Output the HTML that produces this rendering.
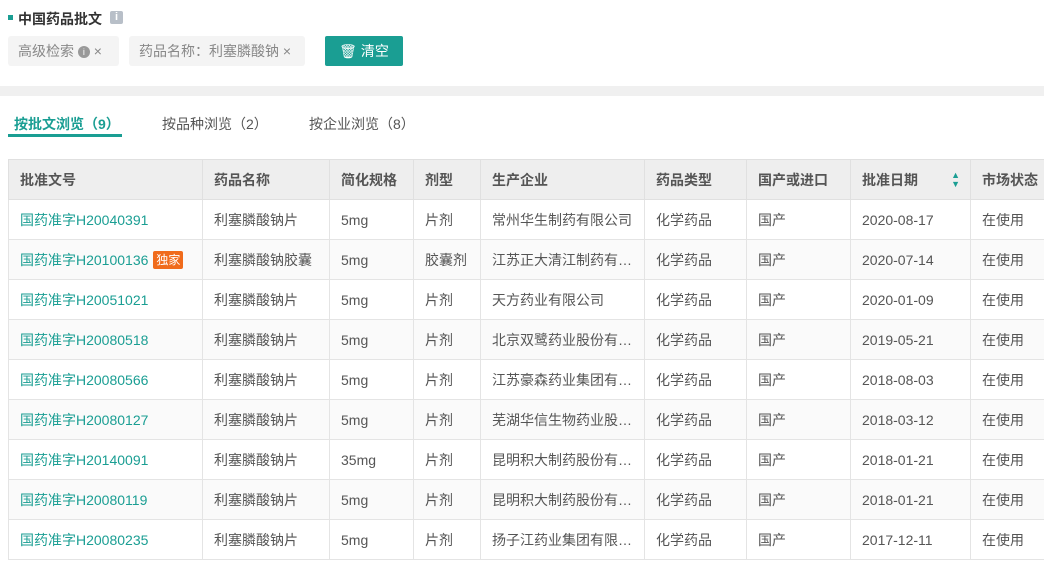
<!DOCTYPE html>
<html><head><meta charset="utf-8"><style>
*{margin:0;padding:0;box-sizing:border-box}
body{width:1044px;height:565px;overflow:hidden;background:#fff;font-family:"Liberation Sans","Noto Sans CJK SC",sans-serif;color:#555;position:relative}
.a{position:absolute}
.tag{position:absolute;top:36px;height:30px;background:#f4f4f4;border-radius:3px;font-size:14px;color:#888;line-height:30px;padding-left:10px}
table{position:absolute;left:8px;top:159px;border-collapse:collapse;font-size:14px;table-layout:fixed;width:1046px}
td,th{border:1px solid #e4e4e4;height:40px;padding-left:11px;text-align:left;white-space:nowrap;overflow:hidden}
th{background:#eeeeee;color:#555;font-weight:bold;border-color:#e0e0e0}
td{color:#555}
tr:nth-child(odd) td{background:#fafafa}
td.l{color:#1a9e93}
.badge{display:inline-block;background:#f06b1c;color:#fff;font-size:12px;padding:0 3px;line-height:18px;border-radius:2px;margin-left:5px;vertical-align:1px}
</style></head><body>
<div class="a" style="left:8px;top:15px;width:5px;height:5px;background:#1a9e93"></div>
<div class="a" style="left:18px;top:9px;font-size:14px;font-weight:bold;color:#333">中国药品批文</div>
<div class="a" style="left:110px;top:11px;width:13px;height:13px;background:#b8bfc8;border-radius:2px;color:#fff;font-size:11px;text-align:center;line-height:13px;font-weight:bold">i</div>
<div class="tag" style="left:8px;width:111px">高级检索 <span style="display:inline-block;width:12px;height:12px;border-radius:50%;background:#999;color:#fff;font-size:9px;line-height:12px;text-align:center;vertical-align:1px">i</span> ×</div>
<div class="tag" style="left:129px;width:176px">药品名称：利塞膦酸钠 ×</div>
<div class="a" style="left:325px;top:36px;width:78px;height:30px;background:#1a9e93;border-radius:2px;color:#fff;font-size:14px;line-height:30px;text-align:center">&#x1F5D1;&#xFE0E; 清空</div>
<div class="a" style="left:0;top:86px;width:1044px;height:10px;background:#f0f0f0"></div>
<div class="a" style="left:14px;top:114px;font-size:14px;font-weight:bold;color:#1a9e93">按批文浏览（9）</div>
<div class="a" style="left:8px;top:134px;width:114px;height:3px;background:#1a9e93"></div>
<div class="a" style="left:162px;top:114px;font-size:14px;color:#555">按品种浏览（2）</div>
<div class="a" style="left:309px;top:114px;font-size:14px;color:#555">按企业浏览（8）</div>
<table>
<colgroup><col style="width:194px"><col style="width:127px"><col style="width:84px"><col style="width:67px"><col style="width:164px"><col style="width:102px"><col style="width:104px"><col style="width:120px"><col style="width:84px"></colgroup>
<tr><th>批准文号</th><th>药品名称</th><th>简化规格</th><th>剂型</th><th>生产企业</th><th>药品类型</th><th>国产或进口</th><th>批准日期<span style="float:right;margin-right:10px;font-size:9px;color:#1a9e93;line-height:9px;margin-top:1px">▲<br>▼</span></th><th>市场状态</th></tr>
<tr><td class="l">国药准字H20040391</td><td>利塞膦酸钠片</td><td>5mg</td><td>片剂</td><td>常州华生制药有限公司</td><td>化学药品</td><td>国产</td><td>2020-08-17</td><td>在使用</td></tr>
<tr><td class="l">国药准字H20100136<span class="badge">独家</span></td><td>利塞膦酸钠胶囊</td><td>5mg</td><td>胶囊剂</td><td>江苏正大清江制药有…</td><td>化学药品</td><td>国产</td><td>2020-07-14</td><td>在使用</td></tr>
<tr><td class="l">国药准字H20051021</td><td>利塞膦酸钠片</td><td>5mg</td><td>片剂</td><td>天方药业有限公司</td><td>化学药品</td><td>国产</td><td>2020-01-09</td><td>在使用</td></tr>
<tr><td class="l">国药准字H20080518</td><td>利塞膦酸钠片</td><td>5mg</td><td>片剂</td><td>北京双鹭药业股份有…</td><td>化学药品</td><td>国产</td><td>2019-05-21</td><td>在使用</td></tr>
<tr><td class="l">国药准字H20080566</td><td>利塞膦酸钠片</td><td>5mg</td><td>片剂</td><td>江苏豪森药业集团有…</td><td>化学药品</td><td>国产</td><td>2018-08-03</td><td>在使用</td></tr>
<tr><td class="l">国药准字H20080127</td><td>利塞膦酸钠片</td><td>5mg</td><td>片剂</td><td>芜湖华信生物药业股…</td><td>化学药品</td><td>国产</td><td>2018-03-12</td><td>在使用</td></tr>
<tr><td class="l">国药准字H20140091</td><td>利塞膦酸钠片</td><td>35mg</td><td>片剂</td><td>昆明积大制药股份有…</td><td>化学药品</td><td>国产</td><td>2018-01-21</td><td>在使用</td></tr>
<tr><td class="l">国药准字H20080119</td><td>利塞膦酸钠片</td><td>5mg</td><td>片剂</td><td>昆明积大制药股份有…</td><td>化学药品</td><td>国产</td><td>2018-01-21</td><td>在使用</td></tr>
<tr><td class="l">国药准字H20080235</td><td>利塞膦酸钠片</td><td>5mg</td><td>片剂</td><td>扬子江药业集团有限…</td><td>化学药品</td><td>国产</td><td>2017-12-11</td><td>在使用</td></tr>
</table>
</body></html>
